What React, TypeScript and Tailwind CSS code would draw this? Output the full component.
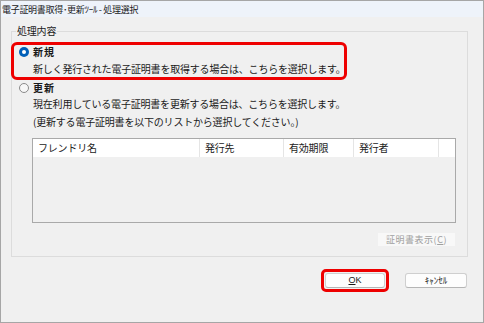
import React from 'react';

const jp = { fontFamily: '"Noto Sans CJK JP", "Noto Sans", sans-serif' };

const Radio: React.FC<{ checked?: boolean }> = ({ checked }) =>
  checked ? (
    <span className="w-[10px] h-[10px] rounded-full bg-[#005fb8] flex items-center justify-center shrink-0">
      <span className="w-[4px] h-[4px] rounded-full bg-white" />
    </span>
  ) : (
    <span className="w-[10px] h-[10px] rounded-full border border-[#8a8a8a] bg-[#f7f7f7] shrink-0" />
  );

const columns = [
  { label: 'フレンドリ名', w: 'w-[167px]' },
  { label: '発行先', w: 'w-[84px]' },
  { label: '有効期限', w: 'w-[70px]' },
  { label: '発行者', w: 'w-[85px]' },
];

export default function App() {
  return (
    <div
      className="w-[484px] h-[323px] bg-[#f0f0f0] border border-[#a6a6a6] flex flex-col text-[#1a1a1a]"
      style={jp}
    >
      {/* Title bar */}
      <div className="h-[16px] bg-[#eef3fa] flex items-center pl-[1px] text-[9px] tracking-[-0.3px] leading-none">
        電子証明書取得･更新ﾂｰﾙ - 処理選択
      </div>

      <div className="flex-1 flex flex-col pl-[10px] pr-[15px] pt-[7px]">
        {/* Group box */}
        <fieldset className="border border-[#dcdcdc] pb-[10px]">
          <legend className="ml-[4px] px-[1px] text-[10px] leading-[14px] tracking-[-0.2px]">処理内容</legend>

          {/* Option 1 (highlighted) */}
          <div className="-ml-[1px] mt-[4px] w-[336px] h-[38px] border-[3px] border-[#ee0000] rounded-[6px] pl-[5px] flex flex-col">
            <div className="h-[14px] flex items-center gap-[4px]">
              <Radio checked />
              <span className="text-[10px] font-bold tracking-[1px] leading-none">新規</span>
            </div>
            <div className="mt-[2px] h-[16px] flex items-center pl-[14px] text-[10px] tracking-[-0.2px] leading-none whitespace-nowrap">
              新しく発行された電子証明書を取得する場合は、こちらを選択します。
            </div>
          </div>

          {/* Option 2 */}
          <div className="mt-[1px] h-[14px] flex items-center gap-[4px] pl-[7px]">
            <Radio />
            <span className="text-[10px] font-bold tracking-[1px] leading-none">更新</span>
          </div>
          <div className="mt-[1px] h-[16px] flex items-center pl-[21px] text-[10px] tracking-[-0.2px] leading-none whitespace-nowrap">
            現在利用している電子証明書を更新する場合は、こちらを選択します。
          </div>
          <div className="mt-[2px] h-[16px] flex items-center pl-[21px] text-[10px] tracking-[-0.2px] leading-none whitespace-nowrap">
            (更新する電子証明書を以下のリストから選択してください。)
          </div>

          {/* Certificate list */}
          <div className="mt-[8px] ml-[20px] mr-[11px] h-[85px] border border-[#a9a9a9] bg-[#f0f0f0] flex flex-col">
            <div className="h-[18px] bg-white flex text-[10px] leading-none tracking-[-0.2px]">
              {columns.map(c => (
                <div key={c.label} className={`${c.w} h-full flex items-center pl-[5px] border-r border-[#e5e5e5]`}>
                  {c.label}
                </div>
              ))}
              <div className="flex-1" />
            </div>
          </div>

          <div className="mt-[10px] mr-[12px] flex justify-end">
            <button className="w-[77px] h-[13px] bg-[#f8f8f8] text-[#a0a0a0] text-[9px] leading-none flex items-center justify-center tracking-[0.5px]">
              証明書表示(<span className="underline">C</span>)
            </button>
          </div>
        </fieldset>

        {/* Dialog buttons */}
        <div className="mt-[12px] flex justify-end items-center gap-[16px] mr-[1px]">
          <div className="border-[3px] border-[#ee0000] rounded-[5px] p-[1px]">
            <button className="w-[60px] h-[15px] bg-[#fdfdfd] border border-[#cfcfcf] border-b-[#b5b5b5] rounded-[3px] text-[9px] leading-none flex items-center justify-center" style={{ fontFamily: '"Liberation Sans", sans-serif' }}>
              <span className="underline">O</span>K
            </button>
          </div>
          <button className="w-[62px] h-[15px] bg-[#fdfdfd] border border-[#cfcfcf] border-b-[#b5b5b5] rounded-[3px] text-[9px] leading-none flex items-center justify-center">
            ｷｬﾝｾﾙ
          </button>
        </div>
      </div>
    </div>
  );
}
